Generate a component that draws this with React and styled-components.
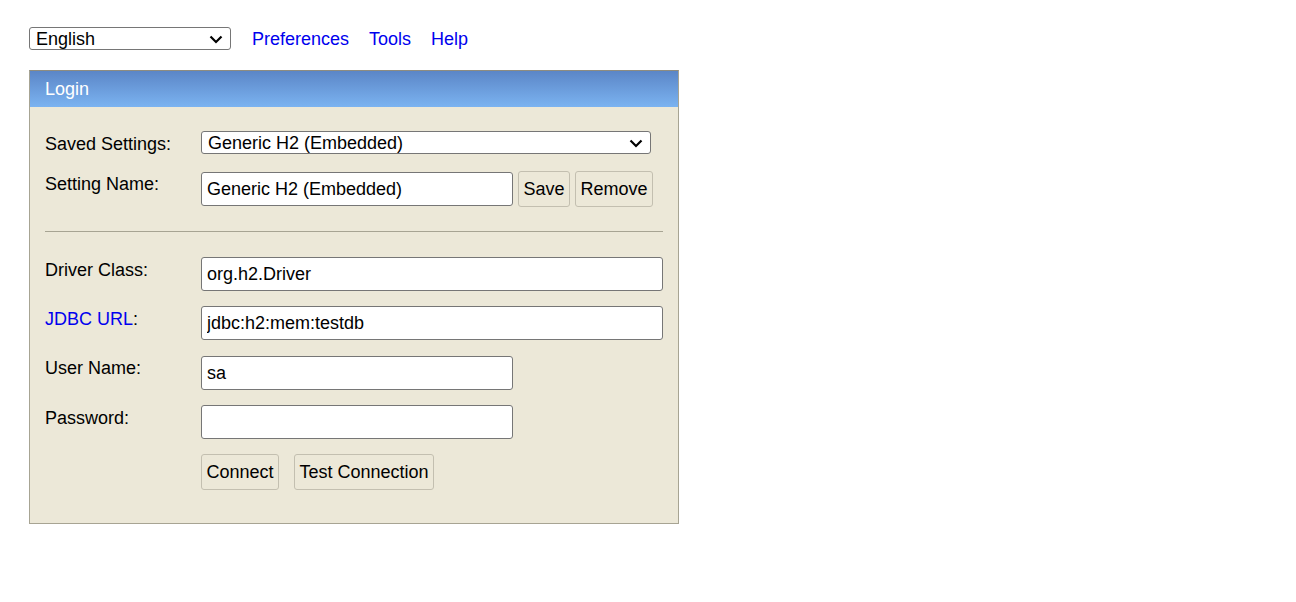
import styled, { createGlobalStyle } from "styled-components";

const GlobalStyle = createGlobalStyle`
  body {
    margin: 0;
    background: #ffffff;
    font-family: "Liberation Sans", Arial, sans-serif;
    font-size: 18px;
    color: #000000;
  }
`;

function Chevron() {
  return (
    <ChevronIcon width="14" height="9" viewBox="0 0 14 9">
      <path d="M1.5 1.5 L7 7 L12.5 1.5" fill="none" stroke="#000" strokeWidth="2.2" />
    </ChevronIcon>
  );
}

function Dropdown({ width, value }) {
  return (
    <SelectWrap $width={width}>
      <NativeSelect defaultValue={value}>
        <option value={value}>{value}</option>
      </NativeSelect>
      <Chevron />
    </SelectWrap>
  );
}

export default function App() {
  return (
    <>
      <GlobalStyle />
      <Page>
        <TopBar>
          <Dropdown width={202} value="English" />
          <NavLink href="#">Preferences</NavLink>
          <NavLink href="#">Tools</NavLink>
          <NavLink href="#">Help</NavLink>
        </TopBar>

        <Panel>
          <PanelHeader>Login</PanelHeader>
          <PanelBody>
            <Row $gap={16}>
              <Label>Saved Settings:</Label>
              <Dropdown width={450} value="Generic H2 (Embedded)" />
            </Row>
            <Row $gap={0}>
              <Label>Setting Name:</Label>
              <Field>
                <TextInput $short $offset={1} defaultValue="Generic H2 (Embedded)" />
                <Button>Save</Button>
                <Button>Remove</Button>
              </Field>
            </Row>

            <Divider />

            <Row $gap={15}>
              <Label>Driver Class:</Label>
              <TextInput defaultValue="org.h2.Driver" />
            </Row>
            <Row $gap={15}>
              <Label>
                <LabelLink href="#">JDBC URL</LabelLink>:
              </Label>
              <TextInput defaultValue="jdbc:h2:mem:testdb" />
            </Row>
            <Row $gap={15}>
              <Label>User Name:</Label>
              <TextInput $short $offset={1} defaultValue="sa" />
            </Row>
            <Row $gap={15}>
              <Label>Password:</Label>
              <TextInput $short type="password" defaultValue="" />
            </Row>
            <Row $gap={0}>
              <Label />
              <Actions>
                <Button>Connect</Button>
                <Button>Test Connection</Button>
              </Actions>
            </Row>
          </PanelBody>
        </Panel>
      </Page>
    </>
  );
}

const Page = styled.div`
  padding: 27px 0 0 29px;
`;

const TopBar = styled.div`
  display: flex;
  align-items: center;
  gap: 20px;
  height: 23px;
`;

const SelectWrap = styled.div`
  position: relative;
  width: ${(p) => p.$width}px;
  height: 23px;
  flex: none;
`;

const NativeSelect = styled.select`
  appearance: none;
  box-sizing: border-box;
  width: 100%;
  height: 23px;
  font: inherit;
  font-size: 18px;
  line-height: 21px;
  color: #000;
  background: #fff;
  border: 1px solid #767676;
  border-radius: 3px;
  padding: 1px 24px 0 6px;
  margin: 0;
`;

const ChevronIcon = styled.svg`
  position: absolute;
  right: 8px;
  top: 8px;
  pointer-events: none;
`;

const NavLink = styled.a`
  color: #0000ee;
  text-decoration: none;
  font-size: 18px;
  padding-top: 2px;
  &:first-of-type {
    margin-left: 1px;
  }
`;

const Panel = styled.section`
  margin-top: 20px;
  width: 648px;
  border: 1px solid #a7a493;
  border-top-color: #8e8c80;
  background: #ece8d8;
`;

const PanelHeader = styled.div`
  height: 36px;
  display: flex;
  align-items: center;
  padding-left: 15px;
  color: #ffffff;
  background: linear-gradient(to bottom, #5b86c7, #7bb3f1);
`;

const PanelBody = styled.div`
  padding: 24px 15px 33px 15px;
`;

const Row = styled.div`
  display: flex;
  align-items: flex-start;
  margin-bottom: ${(p) => p.$gap}px;
`;

const Label = styled.div`
  width: 156px;
  flex: none;
  padding-top: 3px;
  line-height: 21px;
`;

const LabelLink = styled.a`
  color: #0000ee;
  text-decoration: none;
`;

const Field = styled.div`
  display: flex;
  align-items: flex-start;
  gap: 5px;
`;

const TextInput = styled.input`
  box-sizing: border-box;
  width: ${(p) => (p.$short ? "312px" : "462px")};
  height: 34px;
  margin: ${(p) => p.$offset || 0}px 0 0 0;
  font: inherit;
  color: #000;
  background: #fff;
  border: 1px solid #767676;
  border-radius: 3px;
  padding: 0 5px;
`;

const Button = styled.button`
  box-sizing: border-box;
  height: 36px;
  padding: 0 4.5px;
  margin: 0;
  font: inherit;
  color: #000;
  background: #ece8d8;
  border: 1px solid #c3bfb0;
  border-radius: 3px;
`;

const Actions = styled.div`
  display: flex;
  gap: 15px;
`;

const Divider = styled.hr`
  margin: 24px 0 25px 0;
  border: none;
  border-top: 1px solid #a7a493;
`;
